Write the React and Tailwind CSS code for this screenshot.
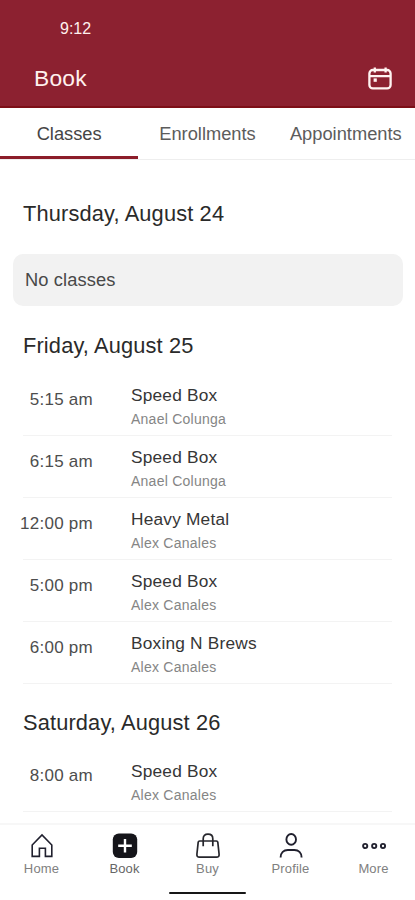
const TABS = ['Classes', 'Enrollments', 'Appointments'];

const FRIDAY = [
  { time: '5:15 am',  name: 'Speed Box',      coach: 'Anael Colunga' },
  { time: '6:15 am',  name: 'Speed Box',      coach: 'Anael Colunga' },
  { time: '12:00 pm', name: 'Heavy Metal',    coach: 'Alex Canales' },
  { time: '5:00 pm',  name: 'Speed Box',      coach: 'Alex Canales' },
  { time: '6:00 pm',  name: 'Boxing N Brews', coach: 'Alex Canales' }
];

const SATURDAY = [
  { time: '8:00 am', name: 'Speed Box', coach: 'Alex Canales' }
];

function CalendarIcon() {
  return (
    <svg className="mt-[2px]" width="24" height="24" viewBox="0 0 24 24" fill="none" stroke="#fff3f1" strokeWidth="2.3">
      <rect x="1.4" y="3" width="21.2" height="18.4" rx="3.4" />
      <path d="M1.5 9.2h21M6.8 0.6v4.8M17.6 0.6v4.8" />
      <rect x="5.6" y="11.4" width="3.2" height="3.4" fill="#fff3f1" stroke="none" />
    </svg>
  );
}

function HomeIcon() {
  return (
    <svg width="26" height="26" viewBox="0 0 26 26" fill="none" stroke="#20202e" strokeWidth="1.6">
      <path d="M3.2 12 13 2l9.8 10v11.4h-6.4v-8.2h-6v8.2H3.2Z" />
    </svg>
  );
}

function BookIcon() {
  return (
    <svg width="26" height="26" viewBox="0 0 26 26">
      <rect x="0.8" y="0.6" width="24.4" height="24.4" rx="6" fill="#15151a" />
      <path d="M13 6v13.6M6.2 12.8h13.6" stroke="#fff" strokeWidth="2.4" />
    </svg>
  );
}

function BagIcon() {
  return (
    <svg width="26" height="26" viewBox="0 0 26 26" fill="none" stroke="#26262c" strokeWidth="1.7">
      <path d="M4.6 8h16.8q1.2 0 1.4 1.2l1.3 12q.2 3-2.6 3h-17q-2.8 0-2.6-3l1.3-12Q3.4 8 4.6 8Z" />
      <path d="M8.2 13.2V5.8q0-4.6 4.8-4.6t4.8 4.6v7.4" />
    </svg>
  );
}

function ProfileIcon() {
  return (
    <svg width="26" height="26" viewBox="0 0 26 26" fill="none" stroke="#20202e" strokeWidth="1.9">
      <ellipse cx="13.2" cy="6.4" rx="4.8" ry="5.4" />
      <path d="M2.6 24.6c0-4.9 3.2-7.6 7.2-7.6h6.6c4 0 7.2 2.7 7.2 7.6" />
    </svg>
  );
}

function MoreIcon() {
  return (
    <svg width="26" height="26" viewBox="0 0 26 26" fill="none" stroke="#20202e" strokeWidth="1.9">
      <circle cx="4.2" cy="13" r="2.1" />
      <circle cx="13.2" cy="13" r="2.1" />
      <circle cx="22" cy="13" r="2.1" />
    </svg>
  );
}

const NAV = [
  { label: 'Home',    Icon: HomeIcon },
  { label: 'Book',    Icon: BookIcon, active: true },
  { label: 'Buy',     Icon: BagIcon },
  { label: 'Profile', Icon: ProfileIcon },
  { label: 'More',    Icon: MoreIcon }
];

function DayTitle({ children }) {
  return (
    <h2 className="pl-[23px] text-[21.8px] leading-[26px] tracking-[0.15px] text-[#2a2a2a]">{children}</h2>
  );
}

function ClassList({ items }) {
  return (
    <ul className="pl-[23px] pr-[23px]">
      {items.map(c => (
        <li key={c.time} className="flex h-[62px] border-b border-[#f3f3f3]">
          <span className="-ml-[13px] w-[83px] pt-[16px] text-right text-[17px] leading-[20px] tracking-[0.25px] whitespace-nowrap text-[#4d4d4d]">
            {c.time}
          </span>
          <div className="ml-[38px] pt-[11px]">
            <p className="text-[17.3px] leading-[20px] tracking-[0.2px] text-[#363636]">{c.name}</p>
            <p className="mt-[6px] text-[14px] leading-[16px] tracking-[0.25px] text-[#858585]">{c.coach}</p>
          </div>
        </li>
      ))}
    </ul>
  );
}

export default function App() {
  return (
    <div className="flex h-[900px] w-[415px] flex-col overflow-hidden bg-white font-['Liberation_Sans',Arial,sans-serif]">
      <header className="h-[108px] shrink-0 border-b-2 border-[#7d0f17] bg-[#8c2130] text-[#fff0ed]">
        <p className="pt-[20px] pl-[60px] text-[16px] leading-[18px]">9:12</p>
        <div className="mt-[26px] flex items-center justify-between pr-[23px] pl-[34px]">
          <h1 className="text-[22.8px] leading-[28px] tracking-[0.2px]">Book</h1>
          <CalendarIcon />
        </div>
      </header>

      <nav className="flex h-[52px] shrink-0 border-b border-[#eeeeee]">
        {TABS.map((tab, i) => (
          <button
            key={tab}
            type="button"
            className={`w-1/3 border-b-[3px] pt-[3px] text-center text-[18.3px] leading-[20px] ${
              i === 0 ? 'border-[#8c1d2a] text-[#454545]' : 'border-transparent text-[#5c5c5c]'
            }`}
          >
            {tab}
          </button>
        ))}
      </nav>

      <main className="min-h-0 flex-1 overflow-hidden pt-[41px]">
        <DayTitle>Thursday, August 24</DayTitle>
        <div className="mt-[27px] ml-[13px] mr-[12px] flex h-[52px] items-center rounded-[10px] bg-[#f2f2f2] pl-[12px] text-[18.3px] tracking-[0.1px] text-[#484848]">
          No classes
        </div>
        <div className="mt-[27px]">
          <DayTitle>Friday, August 25</DayTitle>
        </div>
        <div className="mt-[15px]">
          <ClassList items={FRIDAY} />
        </div>
        <div className="mt-[26px]">
          <DayTitle>Saturday, August 26</DayTitle>
        </div>
        <div className="mt-[14px]">
          <ClassList items={SATURDAY} />
        </div>
      </main>

      <footer className="flex h-[77px] shrink-0 flex-col items-center border-t-2 border-[#f7f7f7]">
        <div className="flex w-full pt-[8px]">
          {NAV.map(({ label, Icon, active }) => (
            <div key={label} className="flex w-1/5 flex-col items-center">
              <Icon />
              <span className={`mt-[2px] text-[13px] leading-[15px] tracking-[0.15px] ${active ? 'text-[#666666]' : 'text-[#808080]'}`}>
                {label}
              </span>
            </div>
          ))}
        </div>
        <div className="mt-[16px] h-[2px] w-[77px] rounded-full bg-[#161616]" />
      </footer>
    </div>
  );
}
